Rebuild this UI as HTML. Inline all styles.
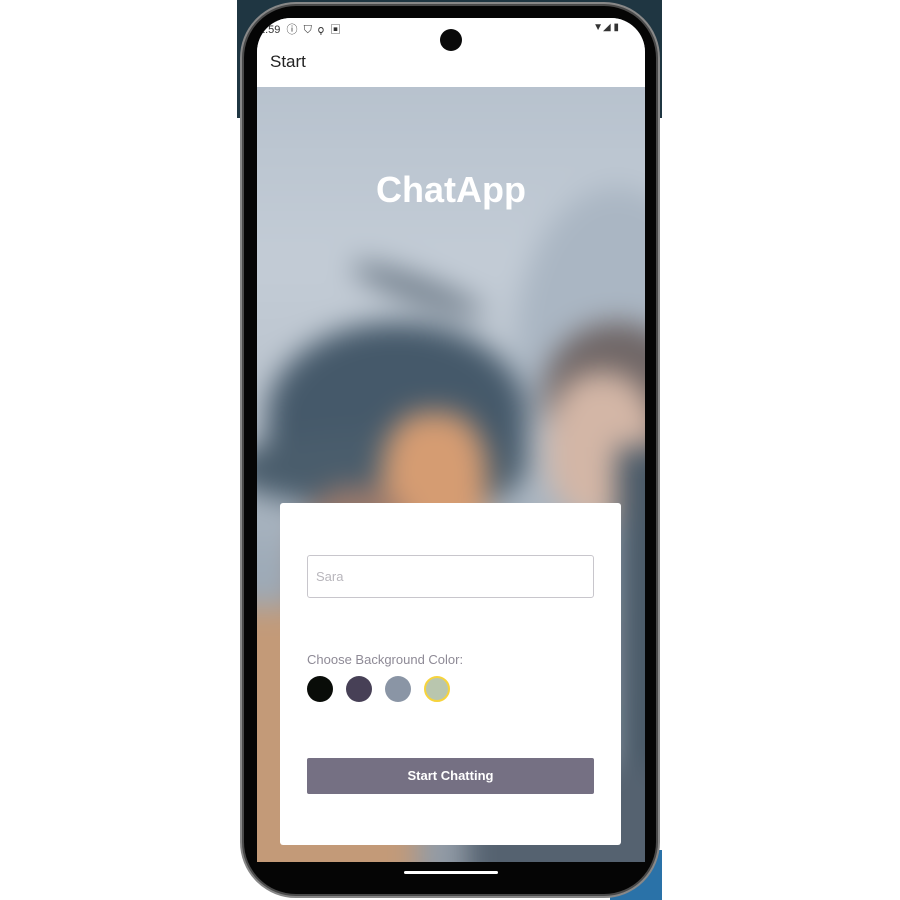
<!DOCTYPE html>
<html><head><meta charset="utf-8"><style>
*{margin:0;padding:0;box-sizing:border-box}
body{width:900px;height:900px;background:#fff;position:relative;overflow:hidden;font-family:"Liberation Sans",sans-serif}
.abs{position:absolute}
</style></head><body>
<div class="abs" style="left:237px;top:0;width:425px;height:118px;background:#1f3642"></div>
<div class="abs" style="left:610px;top:850px;width:52px;height:50px;background:#2a72a8"></div>
<div class="abs" style="left:240px;top:2px;width:420px;height:896px;border-radius:56px;background:#4a4a4a;border:2px solid #888"></div>
<div class="abs" style="left:244px;top:6px;width:412px;height:888px;border-radius:52px;background:#050505"></div>
<!-- screen -->
<div class="abs" style="left:257px;top:18px;width:388px;height:844px;border-radius:34px 34px 0 0;overflow:hidden;background:#b6c0cb">
  <div class="abs" style="left:0;top:0;width:388px;height:69px;background:#fff;z-index:3"></div>
  <div class="abs" style="left:0;top:69px;width:388px;height:775px;overflow:hidden">
    <div class="abs" style="left:-40px;top:-40px;width:470px;height:860px;filter:blur(14px)">
      <div class="abs" style="left:0;top:0;width:470px;height:860px;background:linear-gradient(180deg,#b5c0cc 0%,#c3ccd6 25%,#b9c2cc 45%,#9eabb8 60%,#8f98a3 100%)"></div>
      <div class="abs" style="left:300px;top:140px;width:200px;height:300px;border-radius:50%;background:#aab6c3"></div>
      <div class="abs" style="left:130px;top:230px;width:140px;height:25px;border-radius:50%;background:#6f7c89;transform:rotate(20deg)"></div>
      <div class="abs" style="left:50px;top:275px;width:260px;height:190px;border-radius:50% 50% 30% 30%;background:#45596a"></div>
      <div class="abs" style="left:10px;top:385px;width:300px;height:75px;border-radius:50%;background:#4a5d6c"></div>
      <div class="abs" style="left:165px;top:365px;width:105px;height:150px;border-radius:40%;background:#d59c72"></div>
      <div class="abs" style="left:80px;top:440px;width:120px;height:200px;border-radius:40%;background:#9b7a6c"></div>
      <div class="abs" style="left:325px;top:275px;width:150px;height:150px;border-radius:50%;background:#6f6666"></div>
      <div class="abs" style="left:330px;top:325px;width:110px;height:150px;border-radius:45%;background:#d3b6a6"></div>
      <div class="abs" style="left:0;top:560px;width:200px;height:300px;background:#c39a78"></div>
      <div class="abs" style="left:400px;top:400px;width:70px;height:460px;background:#4a5a68"></div>
      <div class="abs" style="left:250px;top:720px;width:200px;height:140px;background:#556270"></div>
    </div>
    <div class="abs" style="left:0;top:82px;width:388px;text-align:center;color:#fff;font-size:36px;font-weight:bold">ChatApp</div>
  </div>
  <div class="abs" style="left:2px;top:3px;z-index:4;font-size:11px;color:#333">1:59 &nbsp;ⓘ &nbsp;⛉ &nbsp;⚲ &nbsp;▣</div>
  <div class="abs" style="right:26px;top:4px;z-index:4;font-size:10px;color:#333">▼◢ ▮</div>
  <div class="abs" style="left:13px;top:34px;z-index:4;font-size:17px;color:#222">Start</div>
  <!-- card -->
  <div class="abs" style="left:23px;top:485px;width:341px;height:342px;background:#fff;border-radius:3px;z-index:5">
    <div class="abs" style="left:27px;top:52px;width:287px;height:43px;border:1px solid #c8c6cc;border-radius:3px;padding:13px 0 0 8px;font-size:13px;color:#b8b6bc">Sara</div>
    <div class="abs" style="left:27px;top:149px;font-size:13px;color:#8e8a96">Choose Background Color:</div>
    <div class="abs" style="left:27px;top:173px;width:26px;height:26px;border-radius:50%;background:#090c08"></div>
    <div class="abs" style="left:66px;top:173px;width:26px;height:26px;border-radius:50%;background:#474056"></div>
    <div class="abs" style="left:105px;top:173px;width:26px;height:26px;border-radius:50%;background:#8a95a5"></div>
    <div class="abs" style="left:144px;top:173px;width:26px;height:26px;border-radius:50%;background:#b9c6ae;border:2px solid #f6d33c"></div>
    <div class="abs" style="left:27px;top:255px;width:287px;height:36px;background:#757083;border-radius:2px;color:#fff;font-size:13px;font-weight:bold;text-align:center;line-height:36px">Start Chatting</div>
  </div>
</div>
<div class="abs" style="left:440px;top:29px;width:22px;height:22px;border-radius:50%;background:#0a0a0a;z-index:9"></div>
<div class="abs" style="left:404px;top:871px;width:94px;height:3px;border-radius:2px;background:#fff"></div>
</body></html>
